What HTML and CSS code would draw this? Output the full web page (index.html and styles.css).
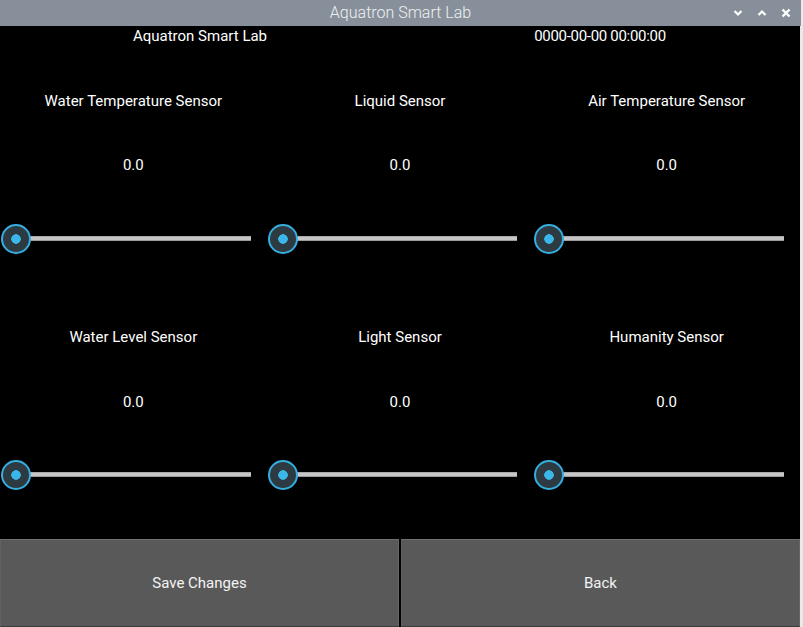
FILE: index.html
```html
<!DOCTYPE html>
<html>
<head>
<meta charset="utf-8">
<link rel="stylesheet" href="styles.css">
</head>
<body>
<div class="window">
  <div class="titlebar">
    <span class="title">Aquatron Smart Lab</span>
    <div class="controls">
      <svg class="ctl" width="10" height="8" viewBox="0 0 10 8"><path d="M1.5 2 L5 5.5 L8.5 2" fill="none" stroke="#fff" stroke-width="2.2"/></svg>
      <svg class="ctl" width="10" height="8" viewBox="0 0 10 8"><path d="M1.5 6 L5 2.5 L8.5 6" fill="none" stroke="#fff" stroke-width="2.2"/></svg>
      <svg class="ctl" width="10" height="10" viewBox="0 0 10 10"><path d="M1.5 1.5 L8.5 8.5 M8.5 1.5 L1.5 8.5" fill="none" stroke="#fff" stroke-width="2.4"/></svg>
    </div>
  </div>
  <div class="content">
    <div class="main">
      <div class="header">
        <div class="hcell">Aquatron Smart Lab</div>
        <div class="hcell date">0000-00-00 00:00:00</div>
      </div>
      <div class="sensors">
        <div class="sensor"><div class="label">Water Temperature Sensor</div><div class="value">0.0</div><div class="slider"><div class="track"></div><div class="handle"></div></div></div>
        <div class="sensor"><div class="label">Liquid Sensor</div><div class="value">0.0</div><div class="slider"><div class="track"></div><div class="handle"></div></div></div>
        <div class="sensor"><div class="label">Air Temperature Sensor</div><div class="value">0.0</div><div class="slider"><div class="track"></div><div class="handle"></div></div></div>
        <div class="sensor"><div class="label">Water Level Sensor</div><div class="value">0.0</div><div class="slider"><div class="track"></div><div class="handle"></div></div></div>
        <div class="sensor"><div class="label">Light Sensor</div><div class="value">0.0</div><div class="slider"><div class="track"></div><div class="handle"></div></div></div>
        <div class="sensor"><div class="label">Humanity Sensor</div><div class="value">0.0</div><div class="slider"><div class="track"></div><div class="handle"></div></div></div>
      </div>
      <div class="buttons">
        <div class="btn">Save Changes</div>
        <div class="btn">Back</div>
      </div>
    </div>
    <div class="edge"></div>
  </div>
</div>
</body>
</html>
```
FILE: styles.css
```css
html, body {
  margin: 0;
  padding: 0;
  background: #000;
}
body {
  width: 803px;
  height: 627px;
  overflow: hidden;
  font-family: Roboto, "Liberation Sans", sans-serif;
  font-size: 15px;
  color: #fff;
}
.window {
  display: flex;
  flex-direction: column;
  width: 803px;
  height: 627px;
  background: #e9e9e9;
}
.titlebar {
  position: relative;
  width: 801px;
  height: 26px;
  background: #87909a;
  display: flex;
  align-items: center;
  justify-content: center;
}
.title {
  font-size: 16px;
  font-weight: 300;
  color: #eef0f2;
  line-height: 26px;
}
.controls {
  position: absolute;
  right: 10px;
  top: 0;
  height: 26px;
  display: flex;
  align-items: center;
  gap: 14px;
}
.ctl { display: block; }
.content {
  display: flex;
  height: 601px;
}
.main {
  width: 800px;
  height: 601px;
  background: #000;
  display: flex;
  flex-direction: column;
}
.edge {
  width: 3px;
  background: #e9e9e9;
}
.header {
  display: grid;
  grid-template-columns: 400px 400px;
  height: 20px;
  flex-shrink: 0;
}
.hcell {
  text-align: center;
  line-height: 20px;
}
.date {
  letter-spacing: -0.3px;
}
.sensors {
  display: grid;
  grid-template-columns: repeat(3, 1fr);
  grid-template-rows: 236px 236px;
  flex-shrink: 0;
}
.sensor {
  display: flex;
  flex-direction: column;
  align-items: stretch;
  text-align: center;
}
.label {
  margin-top: 45px;
  height: 20px;
  line-height: 20px;
}
.value {
  margin-top: 44px;
  height: 20px;
  line-height: 20px;
}
.sensor:nth-child(n+4) .value {
  margin-top: 45px;
}
.slider {
  position: relative;
  margin-top: 48px;
  height: 32px;
}
.sensor:nth-child(n+4) .slider {
  margin-top: 47px;
}
.track {
  position: absolute;
  left: 16px;
  right: 16px;
  top: 13px;
  height: 5px;
  background: #c6c6c6;
  box-shadow: inset 0 1px 0 #a9a9a9, inset 0 -1px 0 #9a9a9a;
}
.handle {
  position: absolute;
  left: 1px;
  top: 1px;
  width: 26px;
  height: 26px;
  border-radius: 50%;
  border: 2px solid #35aee0;
  background: radial-gradient(circle, #3ab6e8 0 4.5px, #2e3a42 5px);
}
.buttons {
  margin-top: 21px;
  display: grid;
  grid-template-columns: 399px 399px;
  gap: 2px;
  height: 88px;
  flex-shrink: 0;
}
.btn {
  background: #595959;
  border-top: 1px solid #717171;
  border-left: 1px solid #626262;
  border-right: 1px solid #666;
  border-bottom: 1px solid #3a3a3a;
  display: flex;
  align-items: center;
  justify-content: center;
  color: #f4f4f4;
}
```
